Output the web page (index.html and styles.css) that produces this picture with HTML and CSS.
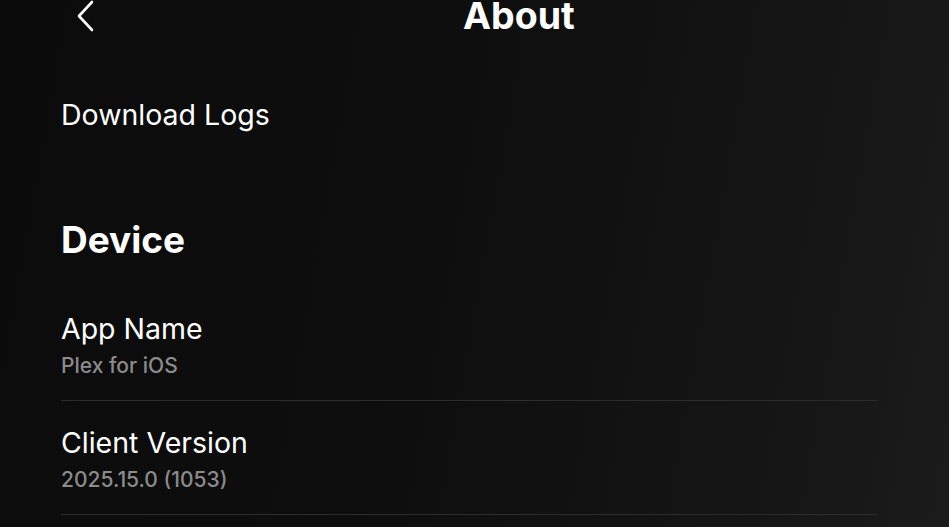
FILE: index.html
```html
<!DOCTYPE html>
<html>
<head>
<meta charset="utf-8">
<link rel="stylesheet" href="styles.css">
</head>
<body>
<div class="screen">
  <header class="topbar">
    <button class="back" aria-label="Back">
      <svg width="20" height="32" viewBox="0 0 20 32"><path d="M16 2 L3 16 L16 30" fill="none" stroke="#fff" stroke-width="2.6" stroke-linecap="round" stroke-linejoin="round"/></svg>
    </button>
    <h1 class="title">About</h1>
  </header>
  <main class="content">
    <div class="link-row">Download Logs</div>
    <h2 class="section">Device</h2>
    <div class="item">
      <div class="item-label">App Name</div>
      <div class="item-value">Plex for iOS</div>
    </div>
    <div class="item">
      <div class="item-label">Client Version</div>
      <div class="item-value">2025.15.0 (1053)</div>
    </div>
  </main>
</div>
</body>
</html>
```
FILE: styles.css
```css
html, body {
  margin: 0;
  padding: 0;
  height: 100%;
}
body {
  background: linear-gradient(100deg, #0b0b0b 0%, #0e0e0e 45%, #151515 80%, #1b1b1b 100%);
  color: #fff;
  font-family: Inter, "Noto Sans", sans-serif;
  overflow: hidden;
}
.screen {
  width: 949px;
  height: 527px;
}
.topbar {
  position: relative;
  height: 36px;
}
.back {
  position: absolute;
  left: 76px;
  top: 0px;
  background: none;
  border: 0;
  padding: 0;
  display: flex;
}
.title {
  margin: 0;
  position: absolute;
  left: 463px;
  top: 0;
  font-size: 37.5px;
  font-weight: 700;
  line-height: 31px;
}
.content {
  margin-left: 61px;
  width: 816px;
}
.link-row {
  margin-top: 62px;
  font-size: 28.5px;
  line-height: 34px;
}
.section {
  margin: 86px 0 25px;
  font-size: 37px;
  font-weight: 700;
  line-height: 44px;
}
.item {
  padding: 25px 0 21px;
  border-bottom: 1px solid #2c2c2c;
}
.item-label {
  font-size: 28.5px;
  line-height: 34px;
}
.item-value {
  font-size: 21px;
  font-weight: 500;
  color: #8b8b8b;
  line-height: 26px;
  margin-top: 7px;
}
```
